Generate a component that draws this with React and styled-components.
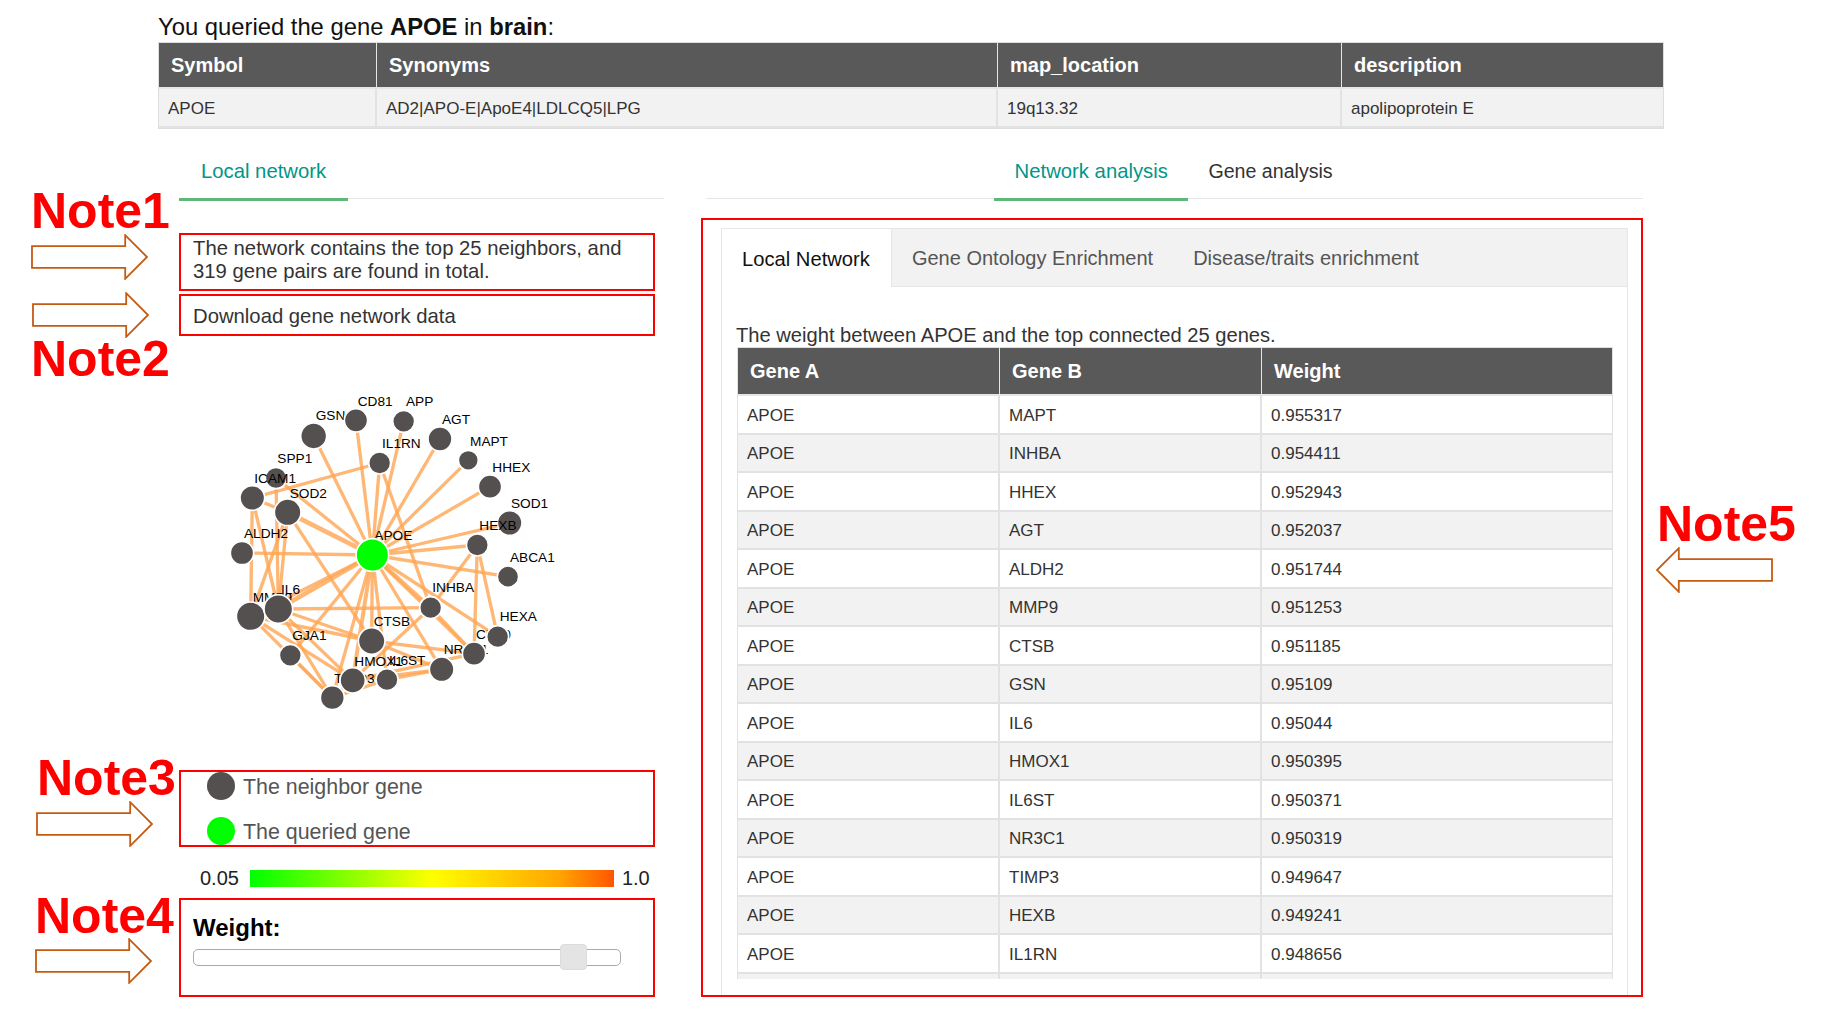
import React from 'react'
import styled, { createGlobalStyle } from 'styled-components'

const GlobalStyle = createGlobalStyle`
  html, body { margin: 0; padding: 0; background: #fff; }
  body { font-family: "Liberation Sans", Arial, sans-serif; color: #333; }
  * { box-sizing: border-box; }
`

const nodes = {
  GSN: [341, 165, 39, 347, 118],
  CD81: [468, 118, 35, 473, 74],
  APP: [611, 121, 33, 618, 74],
  AGT: [720, 174, 36, 726, 129],
  IL1RN: [539, 246, 33, 546, 201],
  MAPT: [805, 238, 30, 810, 194],
  HHEX: [870, 317, 35, 877, 273],
  SPP1: [228, 291, 32, 232, 245],
  ICAM1: [157, 351, 37, 163, 306],
  SOD2: [263, 394, 40, 269, 350],
  SOD1: [929, 426, 37, 933, 380],
  HEXB: [832, 492, 33, 838, 446],
  ALDH2: [126, 516, 35, 132, 471],
  ABCA1: [924, 587, 32, 930, 542],
  INHBA: [692, 680, 33, 697, 633],
  MMP9: [152, 706, 43, 158, 663],
  IL6: [235, 684, 43, 243, 638],
  CTSB: [515, 780, 40, 521, 734],
  GJA1: [271, 823, 33, 277, 778],
  NR3C1: [725, 865, 37, 731, 820],
  CD40: [822, 818, 35, 828, 773],
  HEXA: [893, 767, 33, 899, 721],
  TIMP3: [397, 950, 36, 403, 906],
  HMOX1: [458, 898, 38, 463, 855],
  IL6ST: [561, 896, 33, 567, 851],
  APOE: [517, 522, 49, 523, 478],
}

const links = [
  ['APOE', 'GSN'], ['APOE', 'CD81'], ['APOE', 'APP'], ['APOE', 'AGT'], ['APOE', 'IL1RN'],
  ['APOE', 'MAPT'], ['APOE', 'HHEX'], ['APOE', 'SOD2', 14], ['APOE', 'SPP1'], ['APOE', 'ALDH2'],
  ['APOE', 'IL6', 14], ['APOE', 'MMP9'], ['APOE', 'HEXB'], ['APOE', 'SOD1'], ['APOE', 'ABCA1'],
  ['APOE', 'INHBA', 12], ['APOE', 'CTSB'], ['APOE', 'HMOX1', 12], ['APOE', 'IL6ST'], ['APOE', 'TIMP3'],
  ['APOE', 'NR3C1'], ['APOE', 'CD40'], ['APOE', 'HEXA'], ['APOE', 'GJA1'],
  ['ICAM1', 'SOD2'], ['ICAM1', 'IL1RN'], ['SPP1', 'IL6'], ['SOD2', 'IL6'], ['SOD2', 'MMP9'],
  ['ICAM1', 'IL6'], ['ICAM1', 'MMP9'], ['SOD2', 'CTSB'], ['IL6', 'INHBA'], ['IL6', 'CTSB'],
  ['IL6', 'HMOX1'], ['MMP9', 'CTSB'], ['MMP9', 'TIMP3'], ['MMP9', 'HMOX1'], ['GJA1', 'TIMP3'],
  ['IL6', 'TIMP3'], ['INHBA', 'CD40'], ['HEXB', 'INHBA'], ['INHBA', 'HMOX1'], ['HEXB', 'CD40'],
  ['HEXB', 'HEXA'], ['CTSB', 'NR3C1'], ['CTSB', 'CD40'], ['IL6ST', 'NR3C1'], ['HMOX1', 'CD40'],
  ['TIMP3', 'HMOX1'], ['TIMP3', 'IL6ST'], ['IL1RN', 'INHBA'], ['HMOX1', 'NR3C1'],
]

const weights = [
  ['MAPT', '0.955317'], ['INHBA', '0.954411'], ['HHEX', '0.952943'], ['AGT', '0.952037'],
  ['ALDH2', '0.951744'], ['MMP9', '0.951253'], ['CTSB', '0.951185'], ['GSN', '0.95109'],
  ['IL6', '0.95044'], ['HMOX1', '0.950395'], ['IL6ST', '0.950371'], ['NR3C1', '0.950319'],
  ['TIMP3', '0.949647'], ['HEXB', '0.949241'], ['IL1RN', '0.948656'], ['', ''],
]

const notes = [
  ['Note1', 31, 186],
  ['Note2', 31, 334],
  ['Note3', 37, 753],
  ['Note4', 35, 891],
  ['Note5', 1657, 499],
]

const arrows = [
  [31, 234], [32, 292], [36, 801], [35, 938], [1656, 547, true],
]

const Page = styled.div`
  position: relative;
  width: 1829px;
  height: 1012px;
  overflow: hidden;
  background: #fff;
`
const Heading = styled.div`
  margin: 0 0 2px 158px;
  padding-top: 13px;
  font-size: 23.8px;
  line-height: 27px;
  color: #111;
`
const TopTable = styled.div`
  margin-left: 158px;
  width: 1506px;
  border: 1px solid #dedede;
`
const Row = styled.div`
  display: grid;
  grid-template-columns: ${p => p.$cols};
  height: ${p => p.$height};
  background: ${p => (p.$head ? '#595959' : p.$odd ? '#f2f2f2' : '#fff')};
  border-bottom: 2px solid ${p => (p.$head ? '#e6e6e6' : '#e2e2e2')};
`
const HeadCell = styled.div`
  display: flex;
  align-items: center;
  padding-left: 12px;
  font-size: 20px;
  font-weight: 700;
  color: #fff;
  border-right: 1px solid #e6e6e6;
  &:last-child { border-right: 0; }
`
const Cell = styled.div`
  display: flex;
  align-items: center;
  padding: 3px 0 0 9px;
  font-size: 17px;
  color: #333;
  border-right: 2px solid #e2e2e2;
  &:last-child { border-right: 0; }
`
const Columns = styled.div`
  display: flex;
  margin-top: 10px;
  padding-left: 179px;
`
const LeftColumn = styled.div`
  width: 522px;
`
const RightColumn = styled.div`
  width: 942px;
`
const TabBar = styled.div`
  display: flex;
  width: ${p => p.$width};
  height: 60px;
  margin-left: ${p => p.$inset || '0'};
  padding-left: ${p => p.$pad || '0'};
  border-bottom: 1px solid #e6e6e6;
`
const TabItem = styled.div`
  height: 62px;
  padding: 20px ${p => p.$side} 0;
  font-size: ${p => (p.$active ? '20.3px' : '19.6px')};
  line-height: 24px;
  white-space: nowrap;
  color: ${p => (p.$active ? '#009688' : '#333')};
  border-bottom: 3px solid ${p => (p.$active ? '#5fb878' : 'transparent')};
`
const NoteBox = styled.div`
  width: 476px;
  margin-top: ${p => p.$gap};
  height: ${p => p.$height};
  padding: ${p => p.$pad};
  border: 2px solid #f00;
  font-size: 20.3px;
  line-height: 23px;
  color: #333;
  display: flex;
  align-items: center;
`
const GraphSvg = styled.svg`
  display: block;
  width: 400px;
  height: 360px;
  margin: 45px 0 0 21px;
`
const NodeLabel = styled.text`
  font-family: "Liberation Sans", Arial, sans-serif;
  font-size: 41px;
  fill: #000;
`
const LegendBox = styled.div`
  width: 476px;
  height: 77px;
  margin-top: 29px;
  padding-left: 26px;
  border: 2px solid #f00;
  display: grid;
  grid-auto-rows: 29px;
  row-gap: 16px;
`
const LegendRow = styled.div`
  display: flex;
  align-items: center;
  gap: 8px;
  padding-top: 2px;
  font-size: 21.4px;
  color: #555;
`
const Dot = styled.span`
  width: 28px;
  height: 28px;
  margin-top: -4px;
  border-radius: 50%;
  background: ${p => p.$color};
`
const ScaleRow = styled.div`
  display: flex;
  align-items: center;
  height: 17px;
  margin-top: 23px;
  padding-left: 21px;
  font-size: 20px;
  color: #222;
`
const ScaleBar = styled.div`
  width: 364px;
  height: 17px;
  margin: 0 8px 0 11px;
  background: linear-gradient(to right, #0f0 0%, #ff0 50%, #ffa500 85%, #ff5500 100%);
`
const WeightBox = styled.div`
  width: 476px;
  height: 99px;
  margin-top: 11px;
  padding: 15px 12px 0;
  border: 2px solid #f00;
`
const WeightLabel = styled.div`
  font-size: 24px;
  font-weight: 700;
  line-height: 26px;
  color: #000;
`
const SliderTrack = styled.div`
  position: relative;
  width: 428px;
  height: 17px;
  margin-top: 8px;
  background: #fff;
  border: 1.5px solid #aaa;
  border-radius: 5px;
`
const SliderThumb = styled.div`
  position: absolute;
  left: 366px;
  top: -6px;
  width: 27px;
  height: 26px;
  background: #e4e4e4;
  border: 1px solid #dcdcdc;
  border-radius: 4px;
`
const AnalysisBox = styled.div`
  width: 942px;
  height: 779px;
  margin-top: 19px;
  padding: 8px 13px 0 18px;
  border: 2px solid #f00;
  overflow: hidden;
`
const Panel = styled.div`
  width: 907px;
  height: 769px;
  border: 1px solid #e6e6e6;
  border-bottom: 0;
`
const PanelTabs = styled.div`
  display: flex;
  height: 58px;
  background: #f2f2f2;
  border-bottom: 1px solid #e6e6e6;
`
const PanelTab = styled.div`
  height: ${p => (p.$active ? '58px' : '57px')};
  padding: 2px ${p => (p.$active ? '21px' : '20px')} 0 20px;
  display: flex;
  align-items: center;
  font-size: ${p => (p.$active ? '20.2px' : '20px')};
  color: ${p => (p.$active ? '#111' : '#555')};
  background: ${p => (p.$active ? '#fff' : 'transparent')};
  border-right: ${p => (p.$active ? '1px solid #e6e6e6' : '0')};
`
const Caption = styled.div`
  margin: 36px 0 0 14px;
  font-size: 20.15px;
  line-height: 24px;
  color: #333;
`
const TableClip = styled.div`
  width: 876px;
  height: 632px;
  margin-left: 15px;
  overflow: hidden;
  border-left: 1px solid #e2e2e2;
  border-right: 1px solid #e2e2e2;
  border-top: 1px solid #dedede;
`
const Annotation = styled.div`
  position: absolute;
  left: ${p => p.$left}px;
  top: ${p => p.$top}px;
  font-size: 50px;
  font-weight: 700;
  line-height: 1;
  color: #f00;
`
const ArrowSvg = styled.svg`
  position: absolute;
  left: ${p => p.$left}px;
  top: ${p => p.$top}px;
  width: 117px;
  height: 46px;
  transform: ${p => (p.$flip ? 'scaleX(-1)' : 'none')};
`

const Graph = () => (
  <GraphSvg viewBox="0 0 1200 1080">
    {links.map(([a, b, w], i) => (
      <line
        key={i}
        x1={nodes[a][0]}
        y1={nodes[a][1]}
        x2={nodes[b][0]}
        y2={nodes[b][1]}
        stroke="#ffa552"
        strokeOpacity="0.8"
        strokeWidth={w || 10}
      />
    ))}
    {Object.entries(nodes).map(([name, [x, y, r, lx, ly]]) => (
      <g key={name}>
        <NodeLabel x={lx} y={ly}>{name}</NodeLabel>
        <circle cx={x} cy={y} r={r} fill={name === 'APOE' ? '#0f0' : '#555050'} stroke="#fff" strokeWidth="5" />
      </g>
    ))}
  </GraphSvg>
)

const Arrow = ({ left, top, flip }) => (
  <ArrowSvg $left={left} $top={top} $flip={flip} viewBox="0 0 118 46">
    <polygon points="1,12 95,12 95,1 117,23 95,45 95,34 1,34" fill="#fff" stroke="#c55a11" strokeWidth="1.8" />
  </ArrowSvg>
)

const TOP_COLS = '218px 621px 344px 1fr'
const WEIGHT_COLS = '262px 262px 1fr'

export default function App() {
  return (
    <Page>
      <GlobalStyle />
      <Heading>You queried the gene <b>APOE</b> in <b>brain</b>:</Heading>
      <TopTable>
        <Row $cols={TOP_COLS} $height="46px" $head>
          <HeadCell>Symbol</HeadCell>
          <HeadCell>Synonyms</HeadCell>
          <HeadCell>map_location</HeadCell>
          <HeadCell>description</HeadCell>
        </Row>
        <Row $cols={TOP_COLS} $height="39px" $odd>
          <Cell>APOE</Cell>
          <Cell>AD2|APO-E|ApoE4|LDLCQ5|LPG</Cell>
          <Cell>19q13.32</Cell>
          <Cell>apolipoprotein E</Cell>
        </Row>
      </TopTable>
      <Columns>
        <LeftColumn>
          <TabBar $width="485px">
            <TabItem $active $side="22px">Local network</TabItem>
          </TabBar>
          <NoteBox $gap="34px" $height="58px" $pad="0 12px 4px">
            The network contains the top 25 neighbors, and 319 gene pairs are found in total.
          </NoteBox>
          <NoteBox $gap="3px" $height="42px" $pad="3px 12px 0">Download gene network data</NoteBox>
          <Graph />
          <LegendBox>
            <LegendRow><Dot $color="#555050" />The neighbor gene</LegendRow>
            <LegendRow><Dot $color="#0f0" />The queried gene</LegendRow>
          </LegendBox>
          <ScaleRow>
            0.05
            <ScaleBar />
            1.0
          </ScaleRow>
          <WeightBox>
            <WeightLabel>Weight:</WeightLabel>
            <SliderTrack><SliderThumb /></SliderTrack>
          </WeightBox>
        </LeftColumn>
        <RightColumn>
          <TabBar $width="937px" $inset="5px" $pad="288px">
            <TabItem $active $side="20.6px">Network analysis</TabItem>
            <TabItem $side="20px">Gene analysis</TabItem>
          </TabBar>
          <AnalysisBox>
            <Panel>
              <PanelTabs>
                <PanelTab $active>Local Network</PanelTab>
                <PanelTab>Gene Ontology Enrichment</PanelTab>
                <PanelTab>Disease/traits enrichment</PanelTab>
              </PanelTabs>
              <Caption>The weight between APOE and the top connected 25 genes.</Caption>
              <TableClip>
                <Row $cols={WEIGHT_COLS} $height="48px" $head>
                  <HeadCell>Gene A</HeadCell>
                  <HeadCell>Gene B</HeadCell>
                  <HeadCell>Weight</HeadCell>
                </Row>
                {weights.map(([gene, value], i) => (
                  <Row key={i} $cols={WEIGHT_COLS} $height="38.5px" $odd={i % 2 === 1}>
                    <Cell>{gene && 'APOE'}</Cell>
                    <Cell>{gene}</Cell>
                    <Cell>{value}</Cell>
                  </Row>
                ))}
              </TableClip>
            </Panel>
          </AnalysisBox>
        </RightColumn>
      </Columns>
      {notes.map(([label, left, top]) => (
        <Annotation key={label} $left={left} $top={top}>{label}</Annotation>
      ))}
      {arrows.map(([left, top, flip]) => (
        <Arrow key={top} left={left} top={top} flip={flip} />
      ))}
    </Page>
  )
}
